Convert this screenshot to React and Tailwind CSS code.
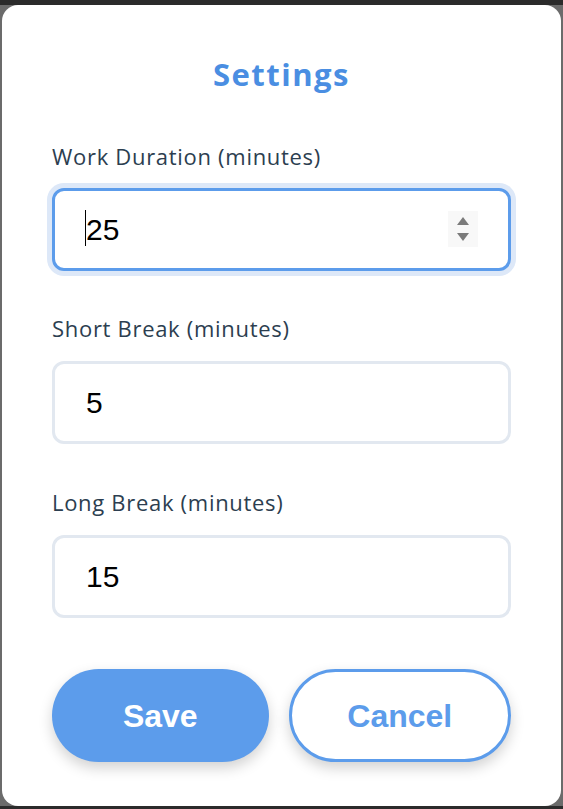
import React, { useState } from 'react';

const labelCls = "block text-[22px] leading-[28px] tracking-[0.7px] text-[#2c3e50] font-['Open_Sans','Noto_Sans',sans-serif]";
const inputBase = "w-full h-[83px] rounded-xl border-[3px] pl-[31px] pr-4 text-[30px] text-black bg-white outline-none font-['Liberation_Sans',Arial,sans-serif]";

export default function App() {
  const [values, setValues] = useState({ work: '25', short: '5', long: '15' });

  return (
    <div className="h-[809px] w-[563px] bg-[#6b6b6b] border-t-[5px] border-b-[3px] border-[#2b2b2b] pl-[2px] pr-[2px] overflow-hidden">
      <div className="h-full bg-white rounded-[16px] px-[50px] pt-[51px] flex flex-col">
        <h2 className="text-center text-[31px] leading-[37px] tracking-[1.5px] font-bold text-[#4a8ee2] font-['Open_Sans','Noto_Sans',sans-serif]">
          Settings
        </h2>

        <label className={labelCls + " mt-[49px]"}>Work Duration (minutes)</label>
        <div className="relative mt-[18px]">
          <input
            value={values.work}
            onChange={e => setValues({ ...values, work: e.target.value })}
            className={inputBase + " border-[#5c9ceb] ring-[5px] ring-[#dde8f8]"}
          />
          {/* caret */}
          <span className="absolute left-[33px] top-[22px] w-px h-[36px] bg-black" />
          {/* spinner */}
          <div className="absolute left-[396px] top-[23px] w-[30px] h-[36px] bg-[#f8f8f8] flex flex-col items-center justify-center gap-[8px]">
            <svg width="12" height="8" viewBox="0 0 12 8"><path d="M6 0 L12 8 L0 8 Z" fill="#7b7b7b" /></svg>
            <svg width="12" height="8" viewBox="0 0 12 8"><path d="M0 0 L12 0 L6 8 Z" fill="#7b7b7b" /></svg>
          </div>
        </div>

        <label className={labelCls + " mt-[43px]"}>Short Break (minutes)</label>
        <input
          value={values.short}
          onChange={e => setValues({ ...values, short: e.target.value })}
          className={inputBase + " mt-[19px] border-[#e2e8f0]"}
        />

        <label className={labelCls + " mt-[44px]"}>Long Break (minutes)</label>
        <input
          value={values.long}
          onChange={e => setValues({ ...values, long: e.target.value })}
          className={inputBase + " mt-[19px] border-[#e2e8f0]"}
        />

        <div className="mt-[51px] flex gap-[20px] font-['Liberation_Sans',Arial,sans-serif]">
          <button className="flex-1 h-[93px] rounded-full bg-[#5c9ceb] text-white text-[32px] font-bold shadow-[0_6px_14px_rgba(0,0,0,0.18)]">
            Save
          </button>
          <button className="flex-1 h-[93px] rounded-full bg-white border-[3px] border-[#5c9ceb] text-[#5c9ceb] text-[32px] font-bold shadow-[0_6px_14px_rgba(0,0,0,0.18)]">
            Cancel
          </button>
        </div>
      </div>
    </div>
  );
}
